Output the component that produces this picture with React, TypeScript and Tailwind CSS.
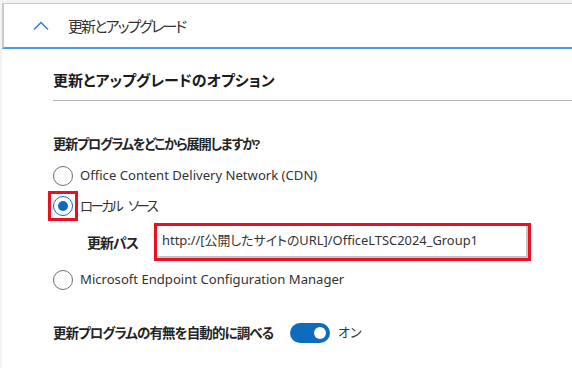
import React from "react";

const font = "font-['Noto_Sans','Noto_Sans_CJK_JP',sans-serif]";

function Radio({ checked }: { checked?: boolean }) {
  return checked ? (
    <span className="w-5 h-5 rounded-full border border-[#0f6cbd] flex items-center justify-center bg-white shrink-0">
      <span className="w-[10px] h-[10px] rounded-full bg-[#0f6cbd]" />
    </span>
  ) : (
    <span className="w-5 h-5 rounded-full border border-[#6e6e6e] bg-white shrink-0" />
  );
}

export default function App() {
  return (
    <div className={`w-[572px] h-[368px] overflow-hidden bg-white text-[#242424] ${font} [font-feature-settings:'palt']`}>
      <div className="h-[3px] bg-[#f3f3f3]" />
      <div className="flex">
        <div className="w-[2px] bg-[#f3f3f3]" />
        <div className="flex-1 h-[46px] border-l-2 border-t border-[#c8c8c8] border-b-2 border-b-[#4a9de3] flex items-center">
          <svg width="18" height="10" viewBox="0 0 18 10" className="ml-[29px]">
            <polyline points="1,8.5 8,1.5 15,8.5" fill="none" stroke="#2f7fd6" strokeWidth="1.5" />
          </svg>
          <span className="ml-[17px] text-[15px] leading-5 tracking-[-1.9px] text-[#333]">更新とアップグレード</span>
        </div>
      </div>
      <div className="flex h-[319px]">
        <div className="w-[2px] bg-[#f3f3f3]" />
        <div className="flex-1 pl-[51px] pt-[21px]">
          <div className="h-[31px] border-b border-[#b3b3b3]">
            <div className="text-[15px] leading-5 font-bold text-[#1b1b1b]">更新とアップグレードのオプション</div>
          </div>
          <div className="mt-[33px] text-[13.2px] leading-5 font-semibold tracking-[-1.2px] text-[#242424]">
            更新プログラムをどこから展開しますか?
          </div>
          <div className="mt-[7px] h-[30px] flex items-center">
            <Radio />
            <span className="ml-[7px] text-[13.1px] text-[#333]">Office Content Delivery Network (CDN)</span>
          </div>
          <div className="h-[30px] flex items-center">
            <span className="relative">
              <Radio checked />
              <span className="absolute -inset-[5px] border-[3px] border-[#e81123]" />
            </span>
            <span className="ml-[7px] text-[13.5px] tracking-[-2.6px] [word-spacing:6px] text-[#333]">ローカル ソース</span>
          </div>
          <div className="mt-[2px] h-[38px] flex items-center">
            <span className="ml-[34px] text-[14px] font-semibold tracking-[-1px] text-[#242424]">更新パス</span>
            <div className="ml-[16px] w-[377px] h-[38px] border-[3px] border-[#e81123]">
              <div className="h-full border-r-2 border-b-2 border-[#c4c4c4] flex items-center pl-[5px]">
                <span className="text-[12.9px] text-[#333]">http://[公開したサイトのURL]/OfficeLTSC2024_Group1</span>
              </div>
            </div>
          </div>
          <div className="mt-[4px] h-[30px] flex items-center">
            <Radio />
            <span className="ml-[7px] text-[13.1px] text-[#333]">Microsoft Endpoint Configuration Manager</span>
          </div>
          <div className="mt-[28px] h-[20px] flex items-center">
            <span className="text-[13.5px] leading-5 font-semibold tracking-[-0.9px] text-[#242424] w-[237px]">更新プログラムの有無を自動的に調べる</span>
            <span className="w-10 h-5 rounded-full bg-[#0f6cbd] flex items-center justify-end pr-[4px]">
              <span className="w-3 h-3 rounded-full bg-white" />
            </span>
            <span className="ml-[8px] text-[13px] text-[#333]">オン</span>
          </div>
        </div>
      </div>
    </div>
  );
}
